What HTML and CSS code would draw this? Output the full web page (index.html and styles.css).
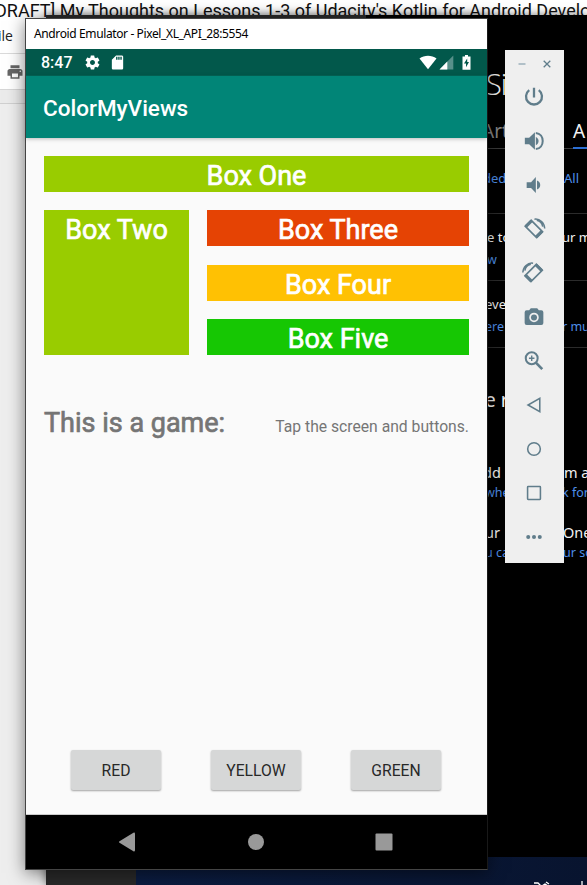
FILE: index.html
```html
<!DOCTYPE html>
<html lang="en">
<head>
<meta charset="utf-8">
<title>Android Emulator</title>
<link rel="stylesheet" href="styles.css">
</head>
<body>
<main class="desktop">
  <section class="docs">
    <div class="doc-title">DRAFT] My Thoughts on Lessons 1-3 of Udacity's Kotlin for Android Develo</div>
    <div class="doc-menu">ile</div>
    <div class="doc-tools"><svg width="18" height="18" viewBox="0 0 24 24"><path fill="#666" d="M19 8H5c-1.66 0-3 1.34-3 3v6h4v4h12v-4h4v-6c0-1.66-1.34-3-3-3zm-3 11H8v-5h8v5zm3-7c-.55 0-1-.45-1-1s.45-1 1-1 1 .45 1 1-.45 1-1 1zm-1-9H6v4h12V3z"/></svg></div>
    <div class="doc-rule"></div>
  </section>

  <section class="store">
    <div class="store-top"></div>
    <div class="store-body">
      <div class="row hero"><span>Si</span></div>
      <div class="row tabs"><span class="muted back5">Art</span><span class="tab">A</span></div>
      <div class="row more link line"><span class="back4">ded</span><span>All</span></div>
      <div class="row item line"><span>e to</span><span class="back2">ur m</span><span class="link">w</span></div>
      <div class="row item line"><span class="back2">eve</span><span></span><span class="link back2">ere</span><span class="link back2">r mu</span></div>
      <div class="row sub"><span class="back2">e r</span></div>
      <div class="row item plain"><span class="back4">dd</span><span>m a</span><span class="link back2">whe</span><span class="link back2">k for</span></div>
      <div class="row item plain"><span class="back2">ur</span><span class="back1">One</span><span class="link back2">u ca</span><span class="link back1">ur so</span></div>
    </div>
    <div class="store-foot"><svg width="60" height="8" viewBox="0 0 60 8"><path d="M4 2h4l3 3M12 5l3-2 3 2M16 1l3 2M52 0v8" fill="none" stroke="#fff" stroke-width="1.300"/></svg></div>
  </section>

  <section class="emulator">
    <div class="titlebar"><span>Android Emulator - Pixel_XL_API_28:5554</span></div>
    <div class="status">
      <span class="clock">8:47</span>
      <svg class="gear" width="17" height="17" viewBox="0 0 24 24"><path fill="#fff" d="M19.43 12.98c.04-.32.07-.64.07-.98s-.03-.66-.07-.98l2.11-1.65c.19-.15.24-.42.12-.64l-2-3.46c-.12-.22-.39-.3-.61-.22l-2.49 1c-.52-.4-1.08-.73-1.69-.98l-.38-2.65C14.46 2.18 14.25 2 14 2h-4c-.25 0-.46.18-.49.42l-.38 2.65c-.61.25-1.17.59-1.69.98l-2.49-1c-.23-.09-.49 0-.61.22l-2 3.46c-.13.22-.07.49.12.64l2.11 1.65c-.04.32-.07.65-.07.98s.03.66.07.98l-2.11 1.65c-.19.15-.24.42-.12.64l2 3.46c.12.22.39.3.61.22l2.49-1c.52.4 1.08.73 1.69.98l.38 2.65c.03.24.24.42.49.42h4c.25 0 .46-.18.49-.42l.38-2.65c.61-.25 1.17-.59 1.69-.98l2.49 1c.23.09.49 0 .61-.22l2-3.46c.12-.22.07-.49-.12-.64l-2.11-1.65zM12 15.5c-1.93 0-3.5-1.57-3.5-3.5s1.57-3.5 3.5-3.5 3.500 1.570 3.500 3.500-1.570 3.500-3.500 3.500z"/></svg>
      <svg class="card" width="17" height="17" viewBox="0 0 24 24"><path fill="#fff" d="M18 2h-8L4.020 8 4 20c0 1.100.9 2 2 2h12c1.100 0 2-.9 2-2V4c0-1.100-.9-2-2-2zm-6 6h-2V4h2v4zm3 0h-2V4h2v4zm3 0h-2V4h2v4z"/></svg>
      <svg class="wifi" width="18" height="15" viewBox="0 0 18 15"><path fill="#fff" d="M.5 3.500C5.300-.3 12.700-.3 17.500 3.500L9 14.200z"/></svg>
      <svg class="signal" width="15" height="15" viewBox="0 0 15 15"><path fill="#57908a" d="M14.300.5v14H.5z"/><path fill="#fff" d="M8.300 6.600v7.900H.5z"/></svg>
      <svg class="battery" width="9" height="15" viewBox="0 0 9 15"><path fill="#fff" d="M3 0h3v1.500h2.500v13.200h-8V1.500H3z"/><path fill="#02584b" d="M5.200 3.500 2 8.500h2v3.700l3-5.200H5.200z"/></svg>
    </div>
    <header class="appbar">ColorMyViews</header>
    <div class="screen">
      <div class="boxes">
        <div class="box one">Box One</div>
        <div class="box two">Box Two</div>
        <div class="box three">Box Three</div>
        <div class="box four">Box Four</div>
        <div class="box five">Box Five</div>
      </div>
      <div class="info"><strong>This is a game:</strong><span>Tap the screen and buttons.</span></div>
      <div class="buttons"><button>RED</button><button>YELLOW</button><button>GREEN</button></div>
    </div>
    <nav class="navbar">
      <svg width="18" height="20" viewBox="0 0 18 20"><path fill="#999" d="M15.400.8Q17 0 17 2v16q0 2-1.600 1.200L1.500 10.800Q.3 10 1.500 9.200z"/></svg>
      <svg width="18" height="20" viewBox="0 0 18 20"><circle cx="9" cy="10" r="8" fill="#999"/></svg>
      <svg width="18" height="20" viewBox="0 0 18 20"><rect x=".5" y="1.500" width="17" height="17" rx="1" fill="#999"/></svg>
    </nav>
  </section>

  <aside class="panel">
    <div class="panel-head">
      <svg width="8" height="8" viewBox="0 0 8 8"><path d="M.5 4h7" stroke="#9db1bb" stroke-width="1.500"/></svg>
      <svg width="8" height="8" viewBox="0 0 8 8"><path d="m.7.7 6.600 6.600m0-6.600L.7 7.300" stroke="#607d8b" stroke-width="1.300"/></svg>
    </div>
    <div class="tool"><svg viewBox="0 0 24 24"><path d="M12 2v10.500M6.800 4.500a8.700 8.700 0 1 0 10.400 0" fill="none" stroke="#607d8b" stroke-width="2.500"/></svg></div>
    <div class="tool"><svg viewBox="0 0 24 24"><path fill="#607d8b" d="M2 8.500v7h4.700L13 21.500v-19L6.700 8.500zM14 7.500v9c2-.8 3-2.500 3-4.500s-1-3.700-3-4.500z"/><path d="M14 3.200c10 1 10 16.600 0 17.600" fill="none" stroke="#607d8b" stroke-width="2.200"/></svg></div>
    <div class="tool"><svg viewBox="0 0 24 24"><path fill="#607d8b" d="M4 9v6.300h4.800L14 20.800V3.200L8.800 9zM15.300 7v10c2.200-.8 3.500-2.700 3.500-5s-1.300-4.200-3.500-5z"/></svg></div>
    <div class="tool"><svg viewBox="0 0 24 24"><g fill="none" stroke="#607d8b"><path stroke-width="1.900" d="m9 2.500 12.300 12.400-6.500 6.500L2.500 9z"/><path stroke-width="3.400" d="M9.500 3 3 9.500M20.800 14.400l-6.500 6.500"/><path stroke-width="1.600" d="M12.500 1.300c6-.8 11 4 11.200 10.200M15 2.500c4 1 6 3.500 6.500 7"/></g></svg></div>
    <div class="tool"><svg viewBox="0 0 24 24"><g transform="matrix(-1 0 0 1 23.500 0)" fill="none" stroke="#607d8b"><path stroke-width="1.900" d="m9 2.500 12.300 12.400-6.500 6.500L2.500 9z"/><path stroke-width="3.400" d="M9.500 3 3 9.500M20.800 14.400l-6.500 6.500"/><path stroke-width="1.600" d="M12.500 1.300c6-.8 11 4 11.200 10.200M15 2.500c4 1 6 3.500 6.500 7"/></g></svg></div>
    <div class="tool"><svg viewBox="0 0 24 24"><path fill="#607d8b" fill-rule="evenodd" d="M8.500 2.500 6.700 4.500H4a2.200 2.200 0 0 0-2.200 2.200v11.800A2.200 2.200 0 0 0 4 20.700h16a2.200 2.200 0 0 0 2.200-2.200V6.700A2.200 2.200 0 0 0 20 4.500h-2.700l-1.800-2zM12 7.300a5.200 5.200 0 1 1 0 10.400 5.200 5.200 0 0 1 0-10.400z"/><circle cx="12" cy="12.500" r="3.300" fill="#607d8b"/></svg></div>
    <div class="tool"><svg viewBox="0 0 24 24"><g fill="none" stroke="#607d8b"><circle cx="9.500" cy="9" r="6.500" stroke-width="2.200"/><path d="M9.500 6v6M6.500 9h6" stroke-width="1.500"/><path d="m14 13.800 7 7" stroke-width="2.900"/></g></svg></div>
    <div class="tool"><svg viewBox="0 0 24 24"><path d="M18.300 4.800v14.400L5.500 12z" fill="none" stroke="#607d8b" stroke-width="1.700"/></svg></div>
    <div class="tool"><svg viewBox="0 0 24 24"><circle cx="12" cy="12" r="6.900" fill="none" stroke="#607d8b" stroke-width="1.700"/></svg></div>
    <div class="tool"><svg viewBox="0 0 24 24"><rect x="5" y="5" width="14" height="14" rx=".6" fill="none" stroke="#607d8b" stroke-width="1.700"/></svg></div>
    <div class="tool"><svg viewBox="0 0 24 24"><g fill="#607d8b"><circle cx="5.700" cy="12" r="2.200"/><circle cx="12" cy="12" r="2.200"/><circle cx="18.300" cy="12" r="2.200"/></g></svg></div>
  </aside>
</main>
</body>
</html>
```
FILE: styles.css
```css
* { box-sizing: border-box; }
body { margin: 0; }
svg { display: block; flex: none; }

.desktop {
  position: relative;
  width: 587px;
  height: 885px;
  overflow: hidden;
  background: #eee;
  font-family: Roboto, sans-serif;
}

/* document page behind everything */
.docs { height: 885px; }
.doc-title {
  height: 23px;
  background: #fff;
  color: #111;
  font-size: 18px;
  line-height: 21px;
  white-space: nowrap;
  text-indent: -5px;
}
.doc-menu {
  height: 30px;
  background: #fff;
  color: #222;
  font: 14px/26px "Open Sans", sans-serif;
  text-indent: -2px;
}
.doc-tools {
  height: 36px;
  padding: 9px 0 0 6px;
  background: #fff;
  border-top: 1px solid #dadada;
}
.doc-rule {
  height: 15px;
  background: #ebebeb;
  border-top: 1px solid #d6d6d6;
  border-bottom: 1px solid #d0d0d0;
}

/* dark store window */
.store {
  position: absolute;
  left: 46px;
  top: 15px;
  width: 541px;
  height: 870px;
  display: flex;
  flex-direction: column;
  background: #000;
  color: #f2f2f2;
  box-shadow: 0 0 9px rgba(0, 0, 0, .55);
  font-family: "Noto Sans", sans-serif;
}
.store-top { height: 3px; width: 320px; background: #292929; }
.store-body { flex: 1; padding-left: 441px; overflow: hidden; }
.store-foot {
  height: 28px;
  padding: 24px 0 0 484px;
  overflow: hidden;
  background: linear-gradient(90deg, #292929 90px, #0b1c40 90px, #08142f);
}
.row {
  display: grid;
  grid-template-columns: 18px 23px;
  column-gap: 59px;
  align-content: start;
  font-size: 14px;
  line-height: 20px;
  white-space: nowrap;
}
.line { border-bottom: 1px solid #2b2b2b; }
.link { color: #4f8fe8; }
.muted { color: #858585; }
.back1 { margin-left: -1px; }
.back2 { margin-left: -2px; }
.back4 { margin-left: -4px; }
.back5 { margin-left: -5px; }
.hero { height: 101px; padding-top: 44px; font-family: "Open Sans", sans-serif; font-weight: 300; font-size: 29px; line-height: 44px; letter-spacing: -1px; }
.hero span { margin-left: -1px; }
.tabs { height: 30px; font-size: 19px; line-height: 25px; border-bottom: 1px solid #3a3a3a; }
.tab { height: 30px; margin-left: 9px; border-bottom: 2px solid #2c6fd3; }
.more { height: 65px; padding-top: 19px; font-size: 13px; }
.item { height: 67px; padding-top: 14px; row-gap: 3px; font-size: 13px; }
.item .link { font-size: 12.500px; }
.item > span { min-height: 19px; line-height: 19px; }
.sub { height: 104px; padding-top: 38px; font-size: 19px; line-height: 28px; }
.item.plain { height: 60px; padding-top: 11px; row-gap: 1px; font-size: 14.500px; }

/* emulator window */
.emulator {
  position: absolute;
  left: 25px;
  top: 18px;
  width: 463px;
  height: 852px;
  display: flex;
  flex-direction: column;
  border: 1px solid #444;
  border-right-color: #191919;
  background: #fafafa;
  box-shadow: 0 3px 16px rgba(0, 0, 0, .5);
}
.titlebar {
  height: 30px;
  padding-left: 8px;
  background: #fff;
  color: #000;
  font: 12px/30px "Noto Sans", sans-serif;
}
.titlebar span { display: block; white-space: nowrap; letter-spacing: -.38px; }
.status {
  height: 27px;
  display: flex;
  align-items: center;
  padding: 0 16px 0 15px;
  background: #02584b;
  border-bottom: 1px solid #046457;
}
.clock { width: 31px; color: #fff; font-size: 16px; font-weight: 500; }
.gear { margin-left: 12px; }
.card { margin-left: 8px; }
.wifi { margin-left: auto; }
.signal { margin-left: 2px; }
.battery { margin-left: 8px; }
.appbar {
  height: 62px;
  padding-left: 17px;
  background: #018577;
  color: #fff;
  font-size: 22.500px;
  font-weight: 500;
  line-height: 65px;
  box-shadow: 0 1px 4px rgba(0, 0, 0, .25);
}
.screen {
  flex: 1;
  display: flex;
  flex-direction: column;
  padding: 18px 18px 24px;
  border-bottom: 1px solid #ccc;
}
.boxes {
  display: grid;
  grid-template-columns: 145px 262px;
  grid-template-rows: repeat(4, 36px);
  gap: 18.400px 18px;
}
.box { color: #fff; font-size: 27px; font-weight: 400; -webkit-text-stroke: .7px #fff; line-height: 40px; text-align: center; }
.one { grid-column: 1 / 3; background: #9c0; }
.two { grid-row: 2 / 5; background: #9c0; }
.three { background: #e54304; }
.four { background: #ffc103; }
.five { background: #16c703; }
.info {
  display: flex;
  justify-content: space-between;
  align-items: baseline;
  margin-top: 52px;
  color: #757575;
  font-size: 15.700px;
}
.info strong { font-size: 27px; font-weight: 400; -webkit-text-stroke: .7px #757575; }
.buttons { display: flex; gap: 50px; margin: auto 27px 0; }
button {
  width: 90px;
  height: 40px;
  border: 0;
  border-radius: 2px;
  background: #d6d7d7;
  color: #282828;
  box-shadow: 0 1px 2px rgba(0, 0, 0, .35);
  font: 15.700px Roboto, sans-serif;
  padding: 0;
}
.navbar {
  height: 54px;
  display: flex;
  align-items: center;
  justify-content: space-between;
  padding: 0 94px 0 92px;
  background: #000;
}

/* emulator tool strip */
.panel {
  position: absolute;
  left: 505px;
  top: 50px;
  width: 59px;
  height: 513px;
  background: #efefef;
}
.panel-head { height: 25px; display: flex; gap: 17px; padding: 10px 0 0 13px; }
.tool { height: 44px; display: flex; align-items: center; padding-left: 18px; }
.tool svg { width: 22px; height: 22px; overflow: visible; }
```
